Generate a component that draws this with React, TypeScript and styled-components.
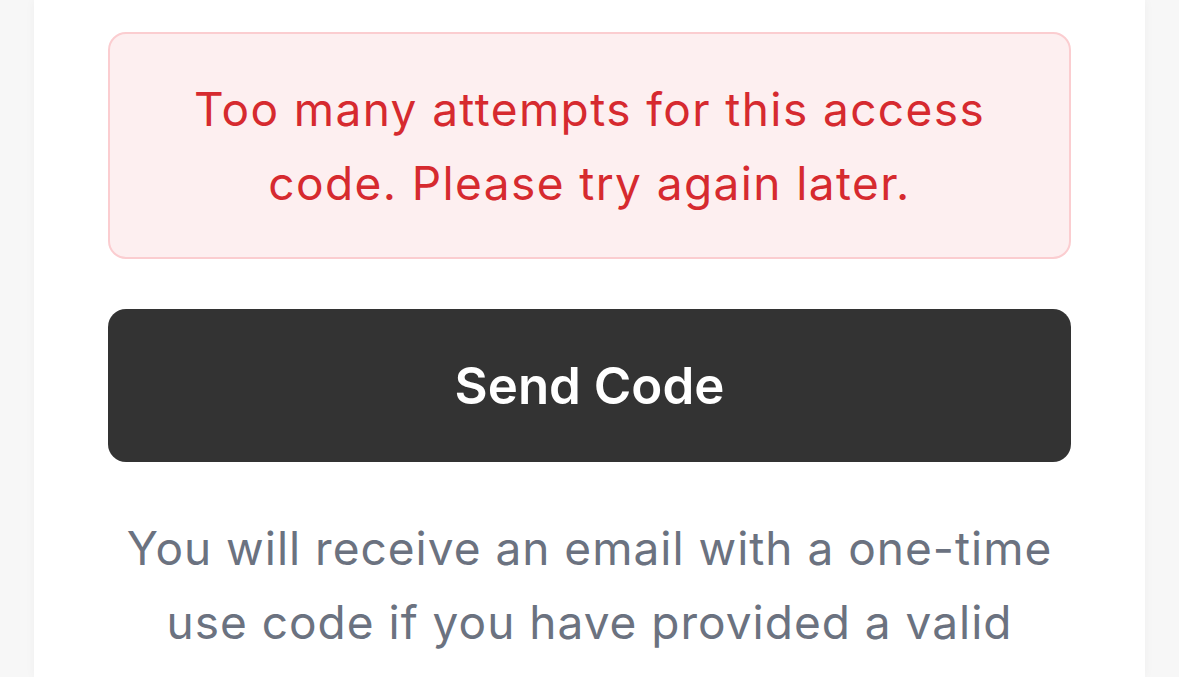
import React from "react";
import styled, { createGlobalStyle } from "styled-components";

const GlobalStyle = createGlobalStyle`
  html, body {
    margin: 0;
    padding: 0;
    background: #f7f7f7;
    overflow: hidden;
  }
  body {
    font-family: Inter, "Noto Sans", Roboto, sans-serif;
  }
`;

const Page = styled.div`
  width: 1179px;
  height: 677px;
  box-sizing: border-box;
  padding: 0 34px;
  background: #f7f7f7;
`;

const Card = styled.main`
  height: 100%;
  box-sizing: border-box;
  background: #ffffff;
  box-shadow: 0 0 10px rgba(0, 0, 0, 0.04);
  padding: 32px 74px 0;
  display: flex;
  flex-direction: column;
`;

const ErrorBox = styled.div`
  box-sizing: border-box;
  height: 227px;
  border: 2px solid #fbcdd0;
  background: #fdeff0;
  border-radius: 18px;
  display: flex;
  align-items: center;
  justify-content: center;
  text-align: center;
  color: #d62a2f;
  font-size: 46px;
  line-height: 74px;
  letter-spacing: 1.4px;
`;

const SendButton = styled.button`
  margin-top: 50px;
  height: 153px;
  border: none;
  border-radius: 18px;
  background: #333333;
  color: #ffffff;
  font-family: Inter, "Noto Sans", sans-serif;
  font-size: 51px;
  font-weight: 600;
  letter-spacing: 0;
  cursor: pointer;
`;

const Helper = styled.p`
  margin: 49px 0 0;
  text-align: center;
  color: #6b7280;
  font-size: 46px;
  line-height: 74px;
  letter-spacing: 1px;
`;

export default function App() {
  return (
    <>
      <GlobalStyle />
      <Page>
        <Card>
          <ErrorBox>
            <span>
              Too many attempts for this access
              <br />
              code. Please try again later.
            </span>
          </ErrorBox>
          <SendButton type="button">Send Code</SendButton>
          <Helper>
            You will receive an email with a one-time
            <br />
            use code if you have provided a valid
          </Helper>
        </Card>
      </Page>
    </>
  );
}
